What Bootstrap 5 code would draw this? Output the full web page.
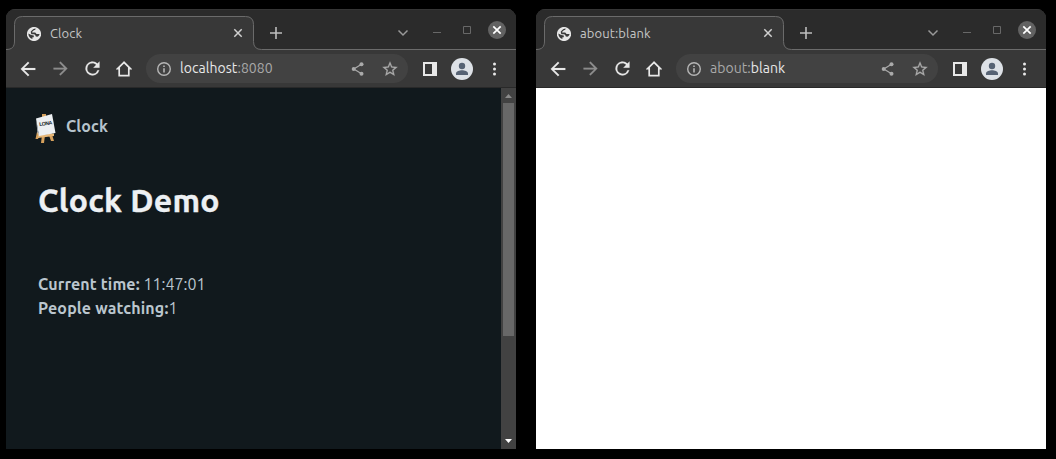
<!DOCTYPE html>
<html lang="en">
<head>
<meta charset="utf-8">
<title>Clock Demo</title>
<link href="https://cdn.jsdelivr.net/npm/bootstrap@5.3.0/dist/css/bootstrap.min.css" rel="stylesheet">
<style>
body{background:#000;font-family:Ubuntu,"Noto Sans",sans-serif;height:459px;overflow:hidden;padding:9px 10px 10px 6px;gap:20px}
svg{display:block;flex:none}
.win{width:510px;height:440px;border-radius:9px 9px 0 0;overflow:hidden;background:#383838}
.strip{height:41px;background:#2b2b2b;box-shadow:inset 0 1px #363636}
.strip>.outline{position:absolute;left:0;top:0}
.strip>.tabs{position:relative;height:41px;padding:0 7px 0 21px}
.tabname{font-size:13px;letter-spacing:.12px;line-height:16px;color:#c6c6c6;width:178px;margin-left:9px;padding-top:7px;white-space:nowrap}
.tools{height:38px;padding:0 11px;border-bottom:1px solid #292929}
.omni{width:262px;height:29px;border-radius:15px;background:#424242;padding:0 9px}
.url{font-size:14px;letter-spacing:.05px;line-height:18px;color:#a9a9a9;margin-left:9px;margin-top:-1px;white-space:nowrap}
.url b{font-weight:400;color:#e8e8e8}
.doc{height:361px;background:#11191d;color:#bbc6ce}
.inner{padding:24px 0 0 28px}
.brandname{font-size:16px;letter-spacing:.1px;line-height:24px;font-weight:700;margin:2px 0 0 8px;color:#b6c3cc}
h1.title{font-size:32px;letter-spacing:.25px;line-height:38px;font-weight:700;-webkit-text-stroke:.35px;color:#edf0f3;margin:37px 0 0 4px;white-space:nowrap}
.facts{font-size:16px;line-height:24px;margin:53px 0 0 4px;white-space:nowrap}
.facts b{letter-spacing:.14px;font-weight:700}
.scroll{width:15px;background:#424242}
.thumb{width:11px;height:233px;background:#686868}
.forward{transform:scaleX(-1);margin-left:11px}
</style>
</head>
<body class="d-flex">
<svg width="0" height="0" class="position-absolute">
<defs>
<symbol id="globe" viewBox="0 0 14 14"><circle cx="7" cy="7" r="7.100" fill="#e6e6e6"/><path d="M8.600 1.500C8.600 2.700 8 3 7 3.200 5.900 3.400 6.500 4.300 5.400 4.500 4.600 5 5.200 5.600 6 5.600H8C9 5.700 8.700 7 9.800 7.100H12.500C12.400 8.500 11.500 9.700 10 9.800L8.600 9.200C8.500 7.800 7.500 7.200 6.300 7.200H4.300L3.700 4.700 5 3.200 6.500 2z" fill="#3a3a3a"/><path d="M1.400 6.500 4.200 8 6.800 8.600V10.200H5.400V12C2.900 11.200 1.400 9.200 1.400 6.500z" fill="#3a3a3a"/></symbol>
<symbol id="back" viewBox="0 0 24 24"><path d="M20 11H7.830l5.590-5.590L12 4l-8 8 8 8 1.410-1.410L7.830 13H20z" fill="currentColor" stroke="currentColor" stroke-width=".15"/></symbol>
<symbol id="reload" viewBox="0 0 24 24"><path d="M17.650 6.350A8 8 0 1 0 19.730 14h-2.080A6 6 0 1 1 12 6c1.660 0 3.140.69 4.220 1.780L13 11h7V4z" fill="#e8e8e8" stroke="#e8e8e8" stroke-width=".2"/></symbol>
<symbol id="home" viewBox="0 0 16 16"><path d="M8 1.300 1.600 7.700H3.200V14.700H12.800V7.700H14.400z" fill="none" stroke="#e8e8e8" stroke-width="1.700"/></symbol>
<symbol id="info" viewBox="0 0 14 14"><circle cx="7" cy="7" r="6.300" fill="none" stroke="#b5b5b5" stroke-width="1.400"/><path d="M6.200 3.400h1.600v1.600H6.200zM6.200 6.200h1.600v4.400H6.200z" fill="#b5b5b5"/></symbol>
<symbol id="share" viewBox="0 0 12 14"><path d="M10 2.300 2.300 7 10 11.700" fill="none" stroke="#aaa" stroke-width="1.200"/><g fill="#aaa"><circle cx="10" cy="2.300" r="2"/><circle cx="2.200" cy="7" r="2"/><circle cx="10" cy="11.700" r="2"/></g></symbol>
<symbol id="star" viewBox="0 0 24 24"><path d="m22 9.240-7.190-.62L12 2 9.190 8.630 2 9.240l5.460 4.730L5.820 21 12 17.270 18.180 21l-1.630-7.030zM12 15.400l-3.760 2.270 1-4.280-3.320-2.880 4.380-.38L12 6.100l1.710 4.040 4.380.38-3.320 2.880 1 4.280z" fill="#aaa" stroke="#aaa" stroke-width=".3"/></symbol>
<symbol id="panel" viewBox="0 0 14 14"><path d="M0 0h14v14H0zM2 2v10h7V2z" fill="#e8e8e8" fill-rule="evenodd"/></symbol>
<symbol id="user" viewBox="0 0 22 22"><circle cx="11" cy="11" r="11" fill="#dde1e6"/><circle cx="11" cy="8" r="3.200" fill="#566273"/><path d="M5 17v-1.500C5 13.300 8.500 12.300 11 12.300s6 1 6 3.200V17z" fill="#566273"/></symbol>
<symbol id="dots" viewBox="0 0 4 14"><g fill="#e8e8e8"><circle cx="2.500" cy="2" r="1.500"/><circle cx="2.500" cy="7" r="1.500"/><circle cx="2.500" cy="12" r="1.500"/></g></symbol>
<symbol id="controls" viewBox="0 0 120 41"><path d="m9.500 21.500 4.500 4.500 4.500-4.500" fill="none" stroke="#999" stroke-width="1.500"/><path d="M44 23.500h8M74.500 17.500h7v7h-7z" fill="none" stroke="#686868"/><circle cx="108" cy="21" r="9" fill="#626262"/><path d="m104.300 17.300 7.400 7.400m0-7.400-7.400 7.400" stroke="#fff" stroke-width="1.700"/></symbol>
<symbol id="outline" viewBox="0 0 510 41"><path d="M0 40.500C6 40.500 8.500 38 8.500 32V15.500Q8.500 7.500 16.500 7.500H239.500Q247.500 7.500 247.500 15.500V32.500Q247.500 40.500 255.500 40.500H510V41H0z" fill="#383838"/><path d="M0 40.500C6 40.500 8.500 38 8.500 32V15.500Q8.500 7.500 16.500 7.500H239.500Q247.500 7.500 247.500 15.500V32.500Q247.500 40.500 255.500 40.500H510" fill="none" stroke="#6b6b6b"/></symbol>
<symbol id="closeplus" viewBox="0 0 60 41"><path d="m6.300 20.300 7.400 7.400m0-7.400-7.400 7.400" stroke="#d0d0d0" stroke-width="1.500"/><path d="M42 24h12M48 18v12" stroke="#bdbdbd" stroke-width="1.600"/></symbol>
</defs></svg>

<main class="win d-flex flex-column">
<div class="strip position-relative"><svg class="outline" width="510" height="41"><use href="#outline"/></svg>
<div class="tabs d-flex align-items-center"><svg width="14" height="14" class="mt-2 overflow-visible"><use href="#globe"/></svg><div class="tabname">Clock</div><svg width="60" height="41"><use href="#closeplus"/></svg><svg width="120" height="41" class="ms-auto"><use href="#controls"/></svg></div></div>
<div class="tools d-flex align-items-center">
<svg width="22" height="22" color="#e8e8e8"><use href="#back"/></svg><svg class="forward" width="21" height="21" color="#8d8d8d"><use href="#back"/></svg><svg width="21" height="21" style="margin-left:11px"><use href="#reload"/></svg><svg width="16" height="16" style="margin-left:13px"><use href="#home"/></svg>
<div class="omni d-flex align-items-center" style="margin-left:14px"><svg width="14" height="14" style="margin-left:2px"><use href="#info"/></svg><div class="url"><b>localhost</b>:8080</div><svg class="ms-auto" width="13" height="14"><use href="#share"/></svg><svg width="18" height="18" style="margin-left:17px"><use href="#star"/></svg></div>
<svg width="14" height="14" style="margin-left:15px"><use href="#panel"/></svg><svg width="22" height="22" style="margin-left:14px"><use href="#user"/></svg><svg width="4" height="14" style="margin-left:19px"><use href="#dots"/></svg></div>
<section class="doc d-flex"><div class="inner flex-grow-1">
<div class="d-flex"><svg width="24" height="32" viewBox="0 0 24 32"><path d="M8 2h4v3H8zM3 20 1.500 27H4l2-5zM8 23 7 31h3l1-8zM14.500 22l2.500 7h3L17.500 21z" fill="#d6a05c"/><path d="m4 23 16-1.500v2.500L4 26z" fill="#e6b677"/><path d="M2 6.500 18 2 21.500 21 5 24z" fill="#edf0f3"/><path d="m2 6.500 3 17.500-1.500-3z" fill="#bfc4c8"/><text x="5.500" y="14" transform="rotate(-8 6 14)" font-family="Liberation Sans" font-size="5.200" font-weight="700" textLength="13" fill="#23282d">LONA</text></svg><span class="brandname">Clock</span></div>
<h1 class="title">Clock Demo</h1>
<div class="facts"><div><b>Current time:</b> 11:47:01</div><div><b>People watching:</b>1</div></div>
</div><div class="scroll d-flex flex-column align-items-center"><svg width="15" height="15"><path d="M4 10h7L7.500 6z" fill="#8a8a8a"/></svg><div class="thumb"></div><svg class="mt-auto" width="15" height="15"><path d="M4 5h7L7.500 9z" fill="#fff"/></svg></div></section>
</main>

<aside class="win d-flex flex-column">
<div class="strip position-relative"><svg class="outline" width="510" height="41"><use href="#outline"/></svg>
<div class="tabs d-flex align-items-center"><svg width="14" height="14" class="mt-2 overflow-visible"><use href="#globe"/></svg><div class="tabname">about:blank</div><svg width="60" height="41"><use href="#closeplus"/></svg><svg width="120" height="41" class="ms-auto"><use href="#controls"/></svg></div></div>
<div class="tools d-flex align-items-center">
<svg width="22" height="22" color="#e8e8e8"><use href="#back"/></svg><svg class="forward" width="21" height="21" color="#8d8d8d"><use href="#back"/></svg><svg width="21" height="21" style="margin-left:11px"><use href="#reload"/></svg><svg width="16" height="16" style="margin-left:13px"><use href="#home"/></svg>
<div class="omni d-flex align-items-center" style="margin-left:14px"><svg width="14" height="14" style="margin-left:2px"><use href="#info"/></svg><div class="url">about:<b>blank</b></div><svg class="ms-auto" width="13" height="14"><use href="#share"/></svg><svg width="18" height="18" style="margin-left:17px"><use href="#star"/></svg></div>
<svg width="14" height="14" style="margin-left:15px"><use href="#panel"/></svg><svg width="22" height="22" style="margin-left:14px"><use href="#user"/></svg><svg width="4" height="14" style="margin-left:19px"><use href="#dots"/></svg></div>
<section class="flex-grow-1 bg-white"></section>
</aside>
</body>
</html>
